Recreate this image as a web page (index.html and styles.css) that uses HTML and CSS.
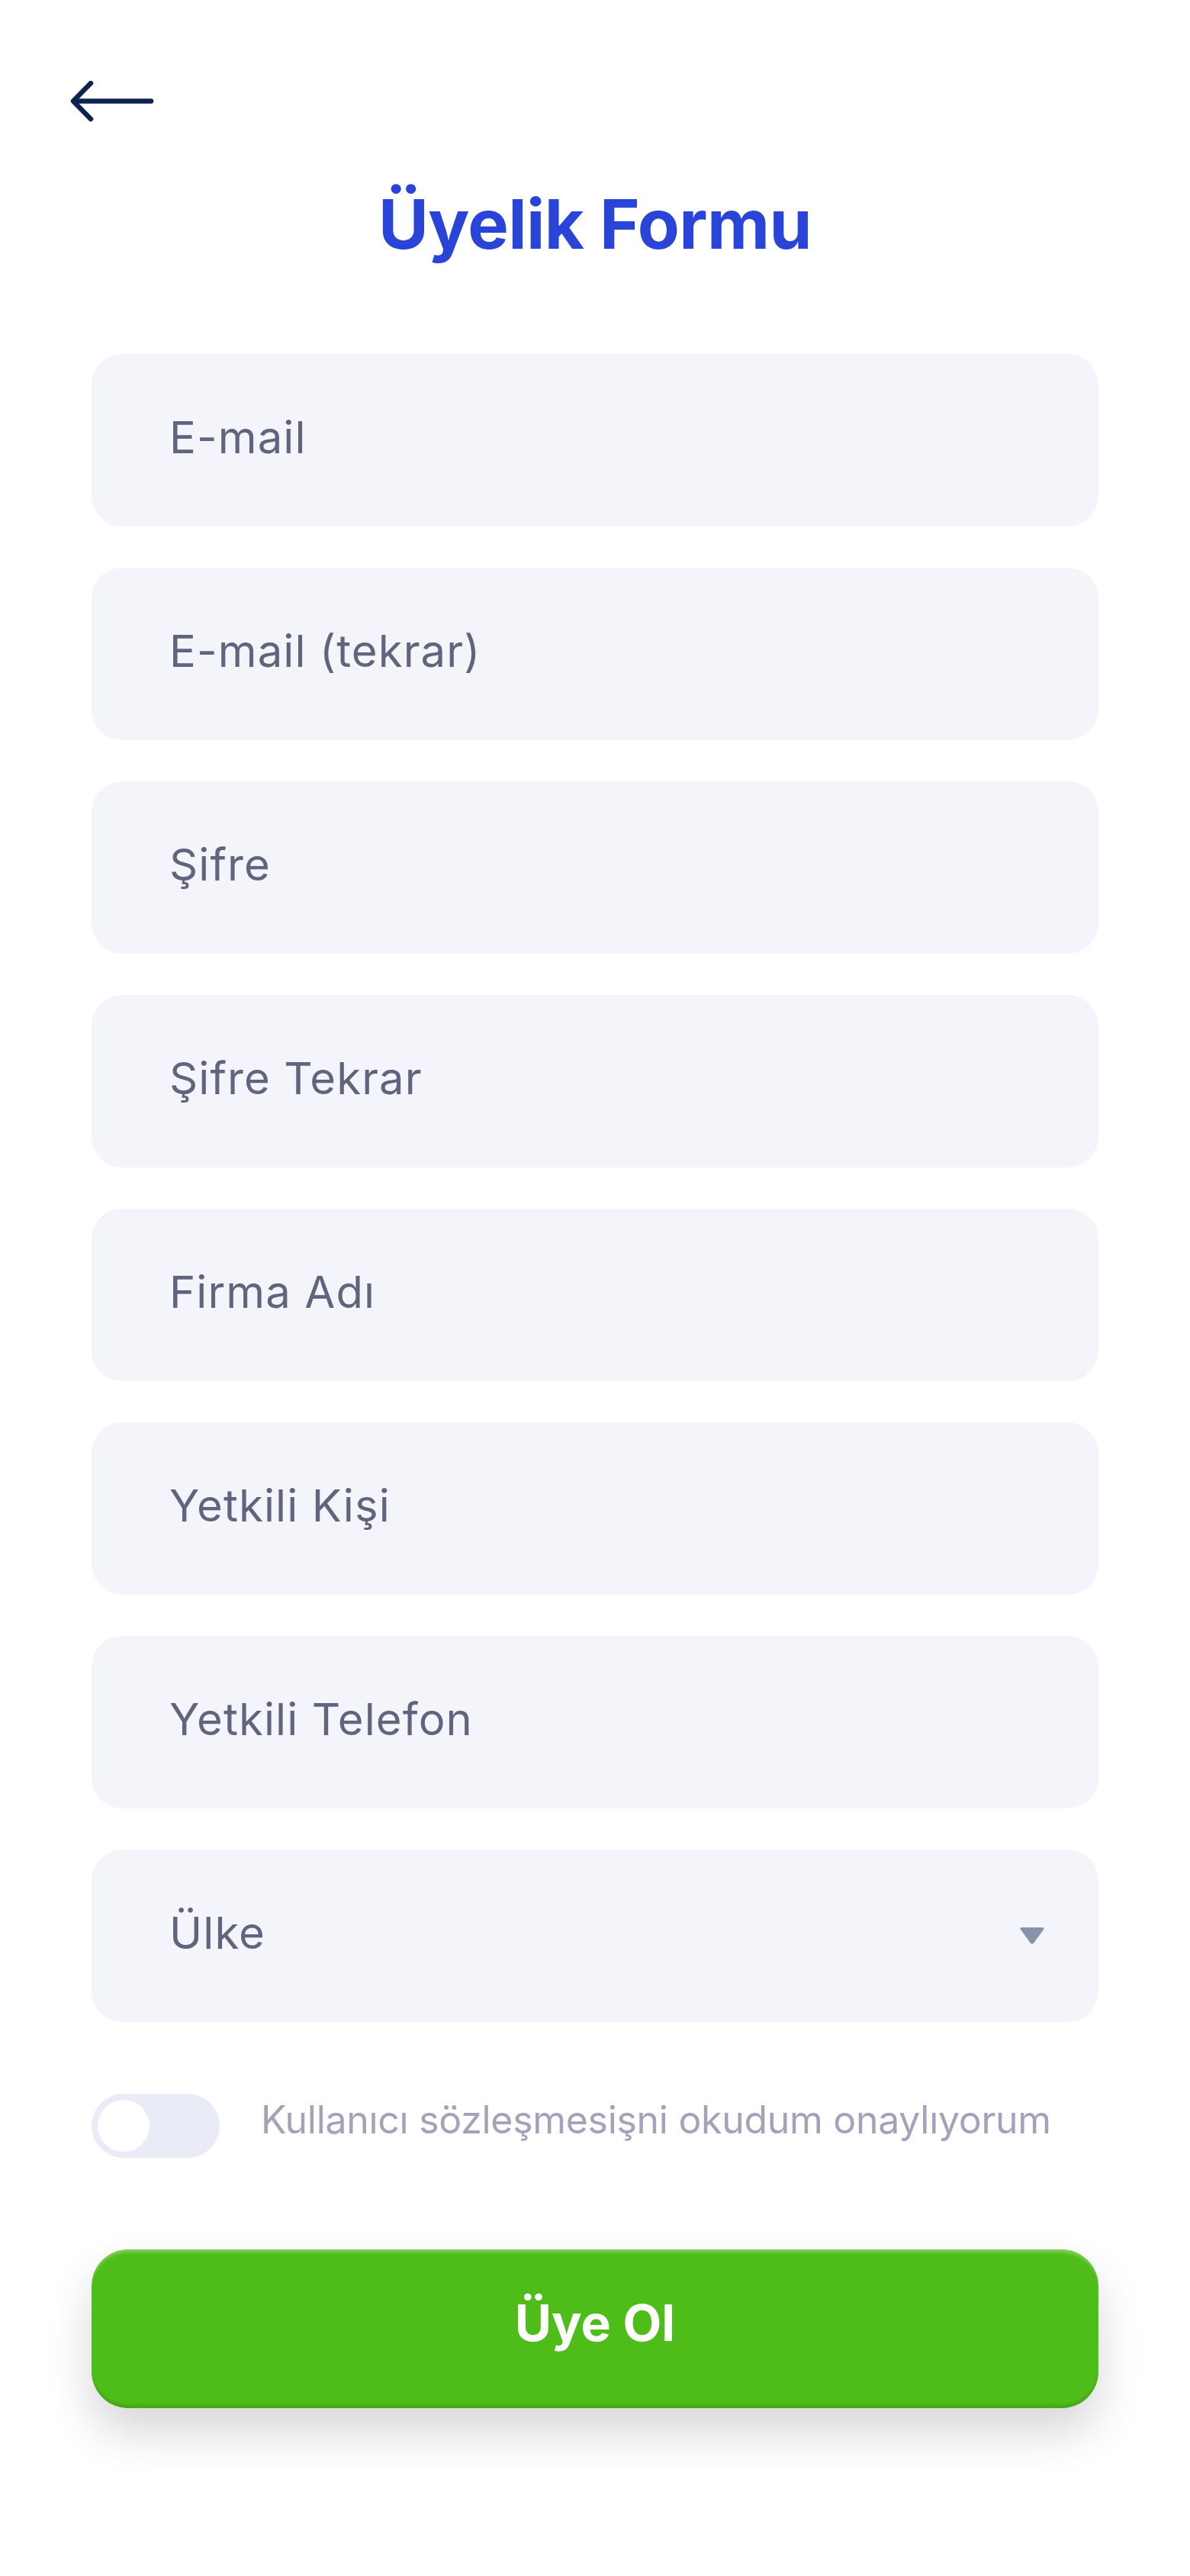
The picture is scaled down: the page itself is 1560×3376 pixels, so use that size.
FILE: index.html
```html
<!DOCTYPE html>
<html lang="tr">
<head>
<meta charset="utf-8">
<title>Üyelik Formu</title>
<link rel="stylesheet" href="styles.css">
</head>
<body>
<div class="screen">
  <header class="topbar">
    <button class="back" aria-label="Geri">
      <svg width="112" height="56" viewBox="0 0 112 56" fill="none" stroke="#0f2350" stroke-width="6.5" stroke-linecap="round" stroke-linejoin="round">
        <path d="M108 26.5 H7"/>
        <path d="M29 3 L6 26.5 L29 50"/>
      </svg>
    </button>
  </header>
  <h1 class="title">Üyelik Formu</h1>
  <form class="form">
    <input class="field" type="email" placeholder="E-mail">
    <input class="field" type="email" placeholder="E-mail (tekrar)">
    <input class="field" type="password" placeholder="Şifre">
    <input class="field" type="password" placeholder="Şifre Tekrar">
    <input class="field" type="text" placeholder="Firma Adı">
    <input class="field" type="text" placeholder="Yetkili Kişi">
    <input class="field" type="tel" placeholder="Yetkili Telefon">
    <div class="field select">
      <span class="select-label">Ülke</span>
      <svg class="caret" width="34" height="24" viewBox="0 0 34 24">
        <path d="M4 1 H30 Q34 1 31.5 4.5 L19.5 21 Q17 24 14.5 21 L2.5 4.5 Q0 1 4 1 Z" fill="#8893aa"/>
      </svg>
    </div>
    <label class="agree">
      <span class="toggle"><span class="knob"></span></span>
      <span class="agree-text">Kullanıcı sözleşmesişni okudum onaylıyorum</span>
    </label>
    <button type="button" class="submit">Üye Ol</button>
  </form>
</div>
</body>
</html>
```
FILE: styles.css
```css
* { box-sizing: border-box; }
html, body { margin: 0; padding: 0; background: #ffffff; }
body { font-family: "Inter", "Noto Sans", sans-serif; }

.screen { width: 1560px; min-height: 3376px; }

.topbar { padding: 106px 0 0 90px; height: 170px; }
.back { border: 0; background: none; padding: 0; display: block; cursor: pointer; }
.back svg { display: block; }

.title {
  margin: 69px 0 0;
  text-align: center;
  font-family: "Inter", sans-serif;
  font-weight: 700;
  font-size: 90px;
  line-height: 110px;
  color: #2b44d8;
  letter-spacing: -0.6px;
}

.form { padding: 0 120px; margin-top: 115px; display: flex; flex-direction: column; }

.field {
  display: flex;
  align-items: center;
  width: 100%;
  height: 226px;
  margin: 0 0 54px;
  padding: 0 0 8px 102px;
  border: 0;
  outline: none;
  border-radius: 40px;
  background: #f4f5fa;
  font-family: "Inter", sans-serif;
  font-size: 58px;
  letter-spacing: 1.1px;
  color: #62647f;
}
.field::placeholder { color: #62647f; opacity: 1; }

.select { justify-content: space-between; padding-right: 70px; margin-bottom: 0; }
.select-label { color: #62647f; }
.caret { display: block; margin-top: 8px; }

.agree { display: flex; align-items: center; gap: 54px; margin-top: 94px; }
.toggle {
  width: 168px; height: 84px; border-radius: 42px;
  background: #e9ecf6; padding: 8px; display: flex; align-items: center;
}
.knob { width: 68px; height: 68px; border-radius: 50%; background: #ffffff; display: block; }
.agree-text {
  font-family: "Inter", sans-serif;
  font-size: 50px;
  color: #a2a3ba;
  letter-spacing: -0.3px;
  padding-bottom: 16px;
}

.submit {
  margin-top: 120px;
  height: 208px;
  width: 100%;
  border: 0;
  border-radius: 48px;
  padding: 0 0 16px;
  background: #4ebc19;
  color: #ffffff;
  font-family: "Inter", sans-serif;
  font-weight: 700;
  font-size: 66px;
  box-shadow:
    inset 0 6px 4px -2px rgba(255,255,255,0.28),
    inset 0 -6px 4px -2px rgba(0,0,0,0.12),
    0 32px 60px rgba(0,0,0,0.16);
  cursor: pointer;
}
```
